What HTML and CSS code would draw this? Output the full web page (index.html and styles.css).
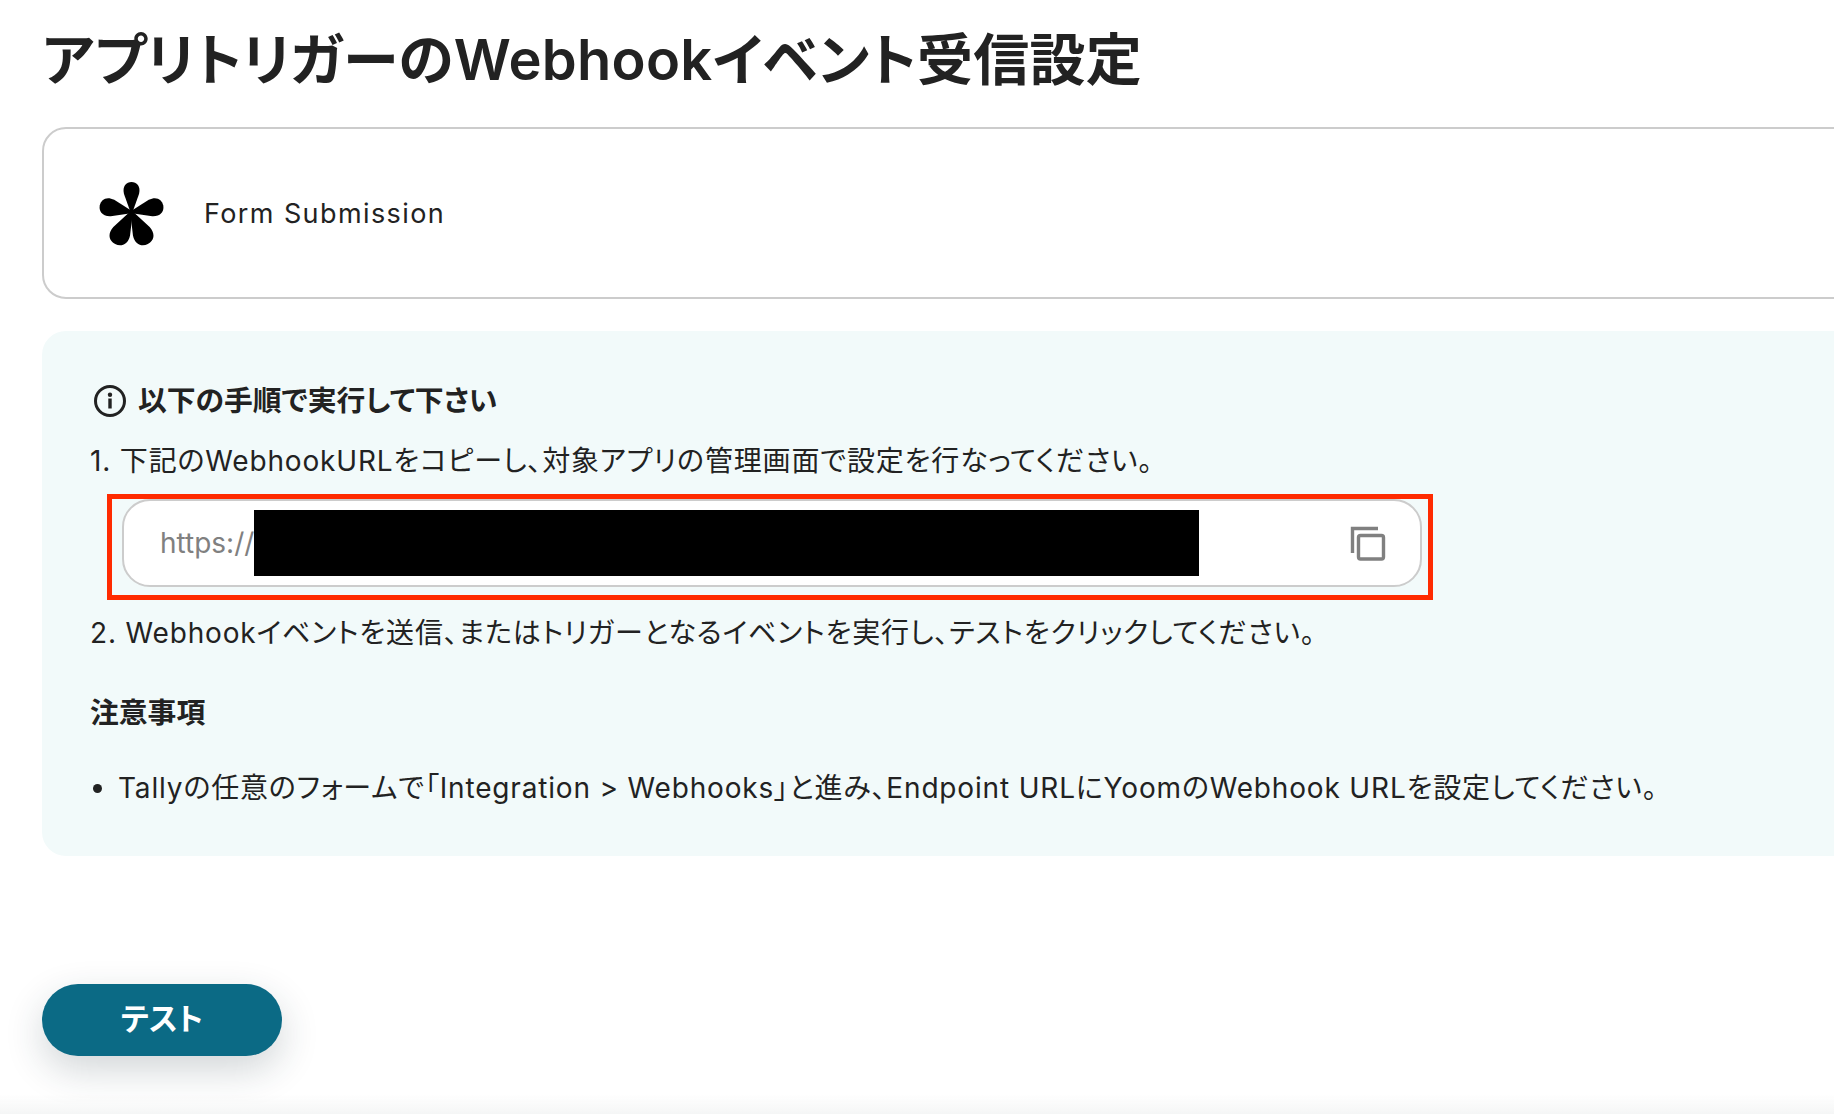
FILE: index.html
```html
<!DOCTYPE html>
<html lang="ja">
<head>
<meta charset="utf-8">
<title>アプリトリガーのWebhookイベント受信設定</title>
<link rel="stylesheet" href="styles.css">
</head>
<body>
<main class="page">
  <h1 class="title">アプリトリガーのWebhookイベント受信設定</h1>
  <section class="event-card">
    <svg class="logo" width="66" height="66" viewBox="-33.500 -32 66 66" aria-hidden="true">
      <g fill="#000">
        <path d="M0 3L-7.500-18C-9.500-26-5-30 0-30C5-30 9.500-26 7.500-18Z"/>
        <path d="M0 3L-7.500-18C-9.500-26-5-30 0-30C5-30 9.500-26 7.500-18Z" transform="rotate(78) scale(1.120 1.080)"/>
        <path d="M0 3L-7.500-18C-9.500-26-5-30 0-30C5-30 9.500-26 7.500-18Z" transform="rotate(-78) scale(1.120 1.080)"/>
        <path d="M0 3L-7.500-18C-9.500-26-5-30 0-30C5-30 9.500-26 7.500-18Z" transform="rotate(153) scale(1.250 1.200)"/>
        <path d="M0 3L-7.500-18C-9.500-26-5-30 0-30C5-30 9.500-26 7.500-18Z" transform="rotate(-153) scale(1.250 1.200)"/>
      </g>
    </svg>
    <span class="event-name">Form Submission</span>
  </section>
  <section class="panel">
    <h2 class="panel-head">
      <svg class="info" width="34" height="34" viewBox="0 0 34 34" aria-hidden="true">
        <circle cx="17" cy="17" r="14.500" fill="none" stroke="#222" stroke-width="3"/>
        <circle cx="17" cy="10.800" r="2.200" fill="#222"/>
        <rect x="15.300" y="14.500" width="3.400" height="10" fill="#222"/>
      </svg>
      以下の手順で実行して下さい
    </h2>
    <p class="step step-one">1. 下記のWebhookURLをコピーし、対象アプリの管理画面で設定を行なってください。</p>
    <div class="url-box">
      <span class="url-text">https://</span>
      <svg class="copy" width="36" height="36" viewBox="0 0 36 36" aria-hidden="true">
        <path d="M2.500 27V2.500H28" fill="none" stroke="#808080" stroke-width="3.400"/>
        <rect x="8.500" y="9.500" width="25" height="23.500" rx="2" fill="none" stroke="#808080" stroke-width="3.400"/>
      </svg>
      <span class="redaction"></span>
      <span class="highlight"></span>
    </div>
    <p class="step step-two">2. Webhookイベントを送信、またはトリガーとなるイベントを実行し、テストをクリックしてください。</p>
    <h3 class="notes-head">注意事項</h3>
    <ul class="notes">
      <li>Tallyの任意のフォームで「Integration &gt; Webhooks」と進み、Endpoint URLにYoomのWebhook URLを設定してください。</li>
    </ul>
  </section>
  <button class="test-button">テスト</button>
</main>
<div class="bottom-fade"></div>
</body>
</html>
```
FILE: styles.css
```css
* { box-sizing: border-box; }
html, body { margin: 0; height: 100%; overflow: hidden; background: #fff; }
body {
  font-family: Inter, "Noto Sans CJK JP", sans-serif;
  font-feature-settings: "palt";
  color: #222;
}
.page { width: 1900px; padding: 26px 0 0 42px; display: flex; flex-direction: column; align-items: flex-start; }
.title { margin: 0; font-size: 56px; line-height: 68px; font-weight: 600; letter-spacing: 0.280px; color: #222; }
.event-card {
  margin-top: 33px;
  width: 100%;
  height: 172px;
  border: 2px solid #ccc;
  border-radius: 24px;
  display: flex;
  align-items: center;
  padding-left: 54px;
  gap: 40px;
}
.logo { flex: none; }
.event-name { font-size: 27px; letter-spacing: 1.400px; color: #222; }
.panel {
  margin-top: 32px;
  width: 100%;
  height: 525px;
  background: #f2fafa;
  border-radius: 24px;
  padding: 52px 0 0 48px;
}
.panel-head { margin: 0; display: flex; align-items: center; gap: 11px; font-size: 28.800px; line-height: 36px; font-weight: 700; }
.info { flex: none; margin-left: 3px; }
.step { margin: 0; font-size: 28px; line-height: 40px; letter-spacing: 0.830px; }
.step-one { margin-top: 22px; }
.url-box {
  position: relative;
  margin: 18px 0 0 32px;
  width: 1300px;
  height: 88px;
  background: #fff;
  border: 2px solid #ccc;
  border-radius: 28px;
  display: flex;
  align-items: center;
  justify-content: space-between;
  padding: 0 34px 0 36px;
}
.url-text { font-size: 28px; color: #808080; }
.copy { flex: none; margin-top: 2px; }
.redaction { position: absolute; left: 130px; top: 9px; width: 945px; height: 66px; background: #000; }
.highlight { position: absolute; left: -17px; top: -7px; width: 1326px; height: 106px; border: 5px solid #ff2a00; }
.step-two { margin-top: 26px; }
.notes-head { margin: 40px 0 0; font-size: 28.800px; line-height: 40px; font-weight: 700; }
.notes { margin: 35px 0 0; padding: 0 0 0 28px; font-size: 28px; line-height: 40px; letter-spacing: 0.830px; }
.test-button {
  margin-top: 128px;
  width: 240px;
  height: 72px;
  padding: 0 0 6px;
  border: 0;
  border-radius: 36px;
  background: #0b6a85;
  color: #fff;
  font: 700 30.500px Inter, "Noto Sans CJK JP", sans-serif;
  font-feature-settings: "palt";
  box-shadow: 0 14px 38px rgba(30, 50, 60, 0.2);
}
.bottom-fade { position: fixed; left: 0; right: 0; bottom: 0; height: 20px; background: linear-gradient(rgba(245,246,246,0), #f5f6f6); }
```
